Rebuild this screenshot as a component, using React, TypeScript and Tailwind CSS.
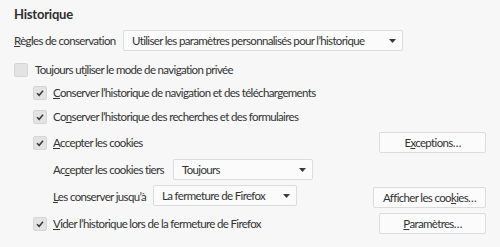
import React from "react";

const FONT = { fontFamily: 'Lato, "Noto Sans", sans-serif' };

function Check({ checked }: { checked?: boolean }) {
  return (
    <span className="w-[14px] h-[14px] shrink-0 rounded-[2px] bg-[#e3e3e3] border border-[#d6d6d6] flex items-center justify-center">
      {checked && (
        <svg width="10" height="10" viewBox="0 0 10 10">
          <path d="M2 5.2 L4.2 7.3 L8 2.8" fill="none" stroke="#3a3a3a" strokeWidth="1.5" />
        </svg>
      )}
    </span>
  );
}

function Select({ label, w }: { label: string; w: string }) {
  return (
    <div className={`${w} shrink-0 h-[21px] rounded-[2px] border border-[#dcdcdc] bg-[#fbfbfb] flex items-center justify-between pl-[8px] pr-[6px]`}>
      <span>{label}</span>
      <svg className="shrink-0" width="7" height="4" viewBox="0 0 7 4">
        <path d="M0 0 H7 L3.5 4 Z" fill="#3a3a3a" />
      </svg>
    </div>
  );
}

function Btn({ children, w }: { children: React.ReactNode; w: string }) {
  return (
    <div className={`${w} shrink-0 h-[21px] rounded-[2px] border border-[#dcdcdc] bg-[#fbfbfb] flex items-center justify-center`}>
      <span>{children}</span>
    </div>
  );
}

export default function App() {
  return (
    <div className="w-[500px] h-[247px] bg-[#f7f7f7] text-[#333] text-[11.5px] tracking-[-0.65px] leading-none whitespace-nowrap pl-[14px] pr-[14px] pt-[4px] overflow-hidden" style={FONT}>
      <div className="h-[20px] flex items-center font-bold text-[13px] tracking-[-0.2px] text-[#2e2e2e]">Historique</div>

      <div className="mt-[6px] h-[21px] flex items-center">
        <span className="w-[109px]"><u>R</u>ègles de conservation</span>
        <Select label="Utiliser les paramètres personnalisés pour l’historique" w="w-[280px]" />
      </div>

      <div className="mt-[9px] h-[20px] flex items-center gap-[7px]">
        <Check />
        <span>Toujours ut<u>i</u>liser le mode de navigation privée</span>
      </div>

      <div className="pl-[19px]">
        <div className="mt-[3px] h-[20px] flex items-center gap-[6px]">
          <Check checked />
          <span><u>C</u>onserver l’historique de navigation et des téléchargements</span>
        </div>
        <div className="mt-[4px] h-[20px] flex items-center gap-[6px]">
          <Check checked />
          <span>Co<u>n</u>server l’historique des recherches et des formulaires</span>
        </div>
        <div className="mt-[5px] h-[21px] flex items-center gap-[6px]">
          <Check checked />
          <span className="flex-1"><u>A</u>ccepter les cookies</span>
          <Btn w="w-[107px]">E<u>x</u>ceptions…</Btn>
        </div>

        <div className="pl-[20px]">
          <div className="mt-[6px] h-[21px] flex items-center">
            <span className="w-[120px]">Ac<u>c</u>epter les cookies tiers</span>
            <Select label="Toujours" w="w-[140px]" />
          </div>
          <div className="mt-[5px] h-[23px] flex">
            <span className="self-center w-[100px]"><u>L</u>es conserver jusqu’à</span>
            <div className="self-start"><Select label="La fermeture de Firefox" w="w-[144px]" /></div>
            <div className="flex-1" />
            <div className="self-end"><Btn w="w-[113px]">Afficher les coo<u>k</u>ies…</Btn></div>
          </div>
        </div>

        <div className="mt-[5px] h-[21px] flex items-center gap-[6px]">
          <Check checked />
          <span className="flex-1"><u>V</u>ider l’historique lors de la fermeture de Firefox</span>
          <Btn w="w-[107px]"><u>P</u>aramètres…</Btn>
        </div>
      </div>
    </div>
  );
}
